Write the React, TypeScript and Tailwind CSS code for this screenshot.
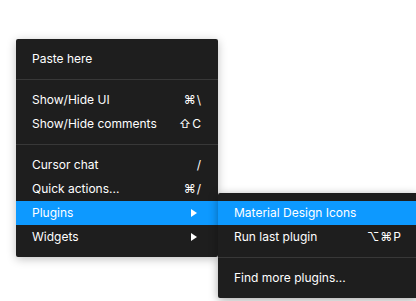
import React from "react";

const font = { fontFamily: "Inter, 'Noto Sans', sans-serif" };

function Arrow() {
  return (
    <svg width="6" height="8" viewBox="0 0 6 8" className="mr-[5px]">
      <path d="M0 0 L6 4 L0 8 Z" fill="white" />
    </svg>
  );
}

function Row({ label, right, active, arrow }: { label: string; right?: string; active?: boolean; arrow?: boolean }) {
  return (
    <div
      className={`flex h-6 items-center justify-between px-4 text-[12px] text-white ${active ? "bg-[#0d99ff]" : ""}`}
    >
      <span>{label}</span>
      {arrow ? <Arrow /> : right ? <span className="tracking-[1px]">{right}</span> : null}
    </div>
  );
}

function Sep() {
  return <div className="my-2 h-px bg-[#383838]" />;
}

export default function App() {
  return (
    <div className="relative h-[301px] w-[416px] overflow-hidden bg-white" style={font}>
      <div className="absolute left-4 top-[39px] w-[202px] rounded-[2px] bg-[#1e1e1e] py-2 shadow-[0_2px_10px_rgba(0,0,0,0.25)]">
        <Row label="Paste here" />
        <Sep />
        <Row label="Show/Hide UI" right="⌘\" />
        <Row label="Show/Hide comments" right="⇧C" />
        <Sep />
        <Row label="Cursor chat" right="/" />
        <Row label="Quick actions..." right="⌘/" />
        <Row label="Plugins" active arrow />
        <Row label="Widgets" arrow />
      </div>
      <div className="absolute left-[218px] top-[193px] w-[200px] rounded-[2px] bg-[#1e1e1e] py-2 shadow-[0_2px_10px_rgba(0,0,0,0.35)]">
        <Row label="Material Design Icons" active />
        <Row label="Run last plugin" right="⌥⌘P" />
        <Sep />
        <Row label="Find more plugins..." />
      </div>
    </div>
  );
}
